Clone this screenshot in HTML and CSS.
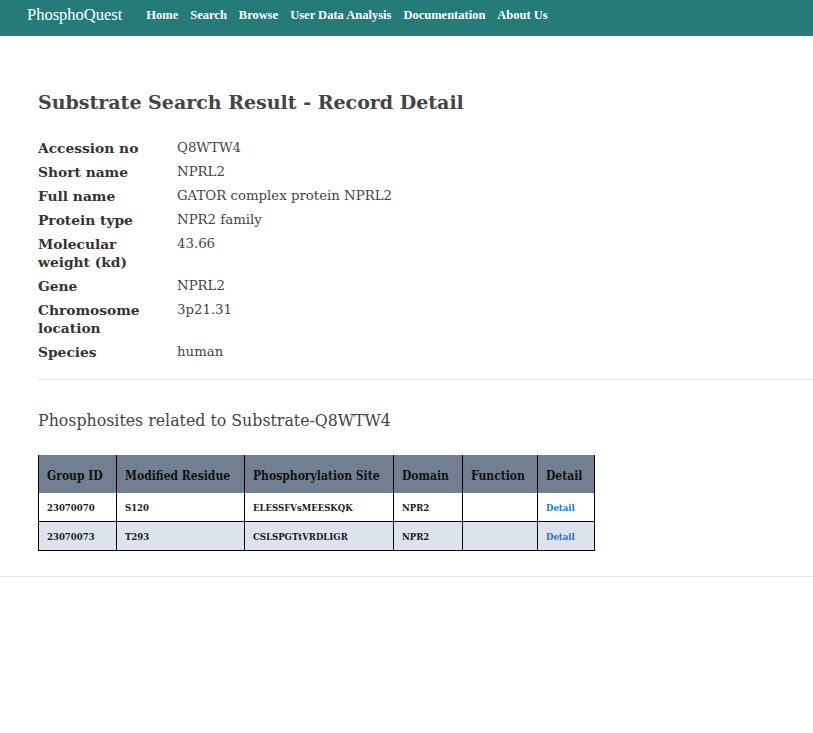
FILE: index.html
```html
<!DOCTYPE html>
<html>
<head>
<meta charset="utf-8">
<link rel="stylesheet" href="styles.css">
</head>
<body>
<nav class="navbar">
  <a class="brand" href="#">PhosphoQuest</a>
  <ul class="nav-links">
    <li><a href="#">Home</a></li>
    <li><a href="#">Search</a></li>
    <li><a href="#">Browse</a></li>
    <li><a href="#">User Data Analysis</a></li>
    <li><a href="#">Documentation</a></li>
    <li><a href="#">About Us</a></li>
  </ul>
</nav>
<main class="content">
  <h2 class="title">Substrate Search Result - Record Detail</h2>
  <dl class="record">
    <dt>Accession no</dt><dd>Q8WTW4</dd>
    <dt>Short name</dt><dd>NPRL2</dd>
    <dt>Full name</dt><dd>GATOR complex protein NPRL2</dd>
    <dt>Protein type</dt><dd>NPR2 family</dd>
    <dt>Molecular weight (kd)</dt><dd>43.66</dd>
    <dt>Gene</dt><dd>NPRL2</dd>
    <dt>Chromosome location</dt><dd>3p21.31</dd>
    <dt>Species</dt><dd>human</dd>
  </dl>
  <hr class="rule">
  <h3 class="subtitle">Phosphosites related to Substrate-Q8WTW4</h3>
  <table class="sites">
    <colgroup>
      <col class="c1"><col class="c2"><col class="c3"><col class="c4"><col class="c5"><col class="c6">
    </colgroup>
    <thead>
      <tr>
        <th>Group ID</th>
        <th>Modified Residue</th>
        <th>Phosphorylation Site</th>
        <th>Domain</th>
        <th>Function</th>
        <th>Detail</th>
      </tr>
    </thead>
    <tbody>
      <tr>
        <td>23070070</td><td>S120</td><td>ELESSFVsMEESKQK</td><td>NPR2</td><td></td><td><a href="#">Detail</a></td>
      </tr>
      <tr class="alt">
        <td>23070073</td><td>T293</td><td>CSLSPGTtVRDLIGR</td><td>NPR2</td><td></td><td><a href="#">Detail</a></td>
      </tr>
    </tbody>
  </table>
</main>
<hr class="rule-full">
</body>
</html>
```
FILE: styles.css
```css
html, body {
  margin: 0;
  padding: 0;
  background: #fff;
}
body {
  font-family: "DejaVu Serif", Georgia, serif;
  color: #333;
}
.navbar {
  display: flex;
  align-items: flex-start;
  box-sizing: border-box;
  height: 36px;
  background: #247b78;
  padding: 5px 0 0 27px;
}
.brand {
  color: #fff;
  text-decoration: none;
  font-family: "Liberation Serif", serif;
  font-size: 16.5px;
  line-height: 19px;
  margin-right: 24px;
}
.nav-links {
  display: flex;
  gap: 12px;
  list-style: none;
  margin: 1px 0 0;
  padding: 0;
  line-height: 16px;
}
.nav-links a {
  color: #fff;
  text-decoration: none;
  font-family: "Liberation Serif", serif;
  font-weight: bold;
  font-size: 12.5px;
}
.content {
  padding-left: 38px;
}
.title {
  font-size: 19px;
  font-weight: bold;
  color: #444;
  margin: 52px 0 23px;
  line-height: 28px;
}
.record {
  display: grid;
  grid-template-columns: 139px auto;
  row-gap: 6px;
  margin: 0;
  line-height: 18px;
}
.record dt {
  font-weight: bold;
  font-size: 13.8px;
  color: #333;
  width: 110px;
}
.record dd {
  margin: 0;
  font-size: 13.3px;
  color: #444;
}
.rule {
  border: 0;
  border-top: 1px solid #e6e6e6;
  margin: 18px 0 29px;
}
.subtitle {
  font-size: 15.8px;
  font-weight: normal;
  color: #444;
  margin: 0 0 22px;
  line-height: 24px;
}
.sites {
  border-collapse: collapse;
  table-layout: fixed;
  width: 556px;
}
.sites th {
  background: #708090;
  color: #111;
  font-family: "DejaVu Serif Condensed", "DejaVu Serif", serif;
  font-stretch: condensed;
  font-size: 12px;
  font-weight: bold;
  text-align: left;
  height: 34px;
  padding: 4px 8px 0;
  border-left: 1.5px solid #000;
  border-right: 1.5px solid #000;
  white-space: nowrap;
  overflow: hidden;
}
.sites td {
  height: 28px;
  padding: 0 8px;
  border: 1.5px solid #000;
  font-family: "DejaVu Serif Condensed", "DejaVu Serif", serif;
  font-stretch: condensed;
  font-size: 9.5px;
  font-weight: bold;
  color: #1a1a1a;
  white-space: nowrap;
}
.sites tbody tr:first-child td {
  border-top: 0;
}
.sites tr.alt td {
  background: #dce3ed;
}
.sites a {
  color: #1a73e8;
  text-decoration: none;
}
.c1 { width: 78px; }
.c2 { width: 128px; }
.c3 { width: 149px; }
.c4 { width: 69px; }
.c5 { width: 75px; }
.c6 { width: 57px; }
.rule-full {
  border: 0;
  border-top: 1px solid #e6e6e6;
  margin: 25px 0 0;
}
```
